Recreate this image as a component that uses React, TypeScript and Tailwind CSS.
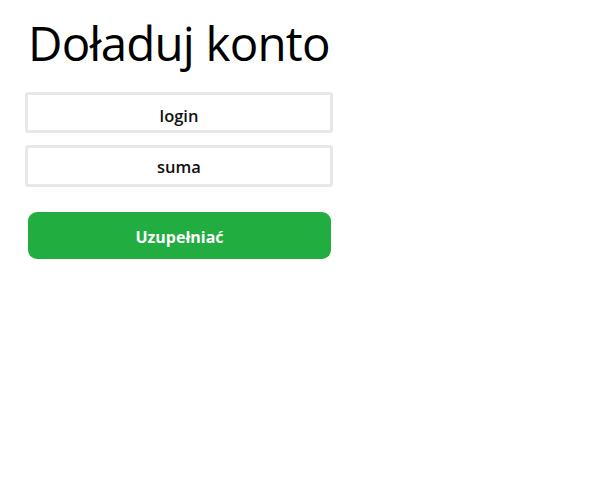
export default function App() {
  return (
    <div className="min-h-screen bg-white px-[25px] pt-[10px]" style={{ fontFamily: '"Open Sans", "Noto Sans", sans-serif' }}>
      <div className="w-[308px]">
        <h1 className="pl-[3px] text-[47.5px] font-medium leading-[66px] tracking-[-0.8px] text-black">Doładuj konto</h1>
        <div className="mt-[16px] flex flex-col gap-[12px]">
          <input
            className="h-[41px] w-full rounded-[3px] border-[3px] border-[#e8e8e8] pt-[5px] text-center text-[16.5px] font-semibold text-[#111] placeholder:text-[#111] outline-none"
            placeholder="login"
          />
          <input
            className="h-[42px] w-full rounded-[3px] border-[3px] border-[#e8e8e8] pt-0 text-center text-[16.5px] font-semibold text-[#111] placeholder:text-[#111] outline-none"
            placeholder="suma"
          />
        </div>
        <button className="mx-[3px] mt-[25px] h-[47px] w-[303px] rounded-[9px] bg-[#21ad3f] pt-[2px] text-[16px] font-bold text-white">
          Uzupełniać
        </button>
      </div>
    </div>
  );
}
